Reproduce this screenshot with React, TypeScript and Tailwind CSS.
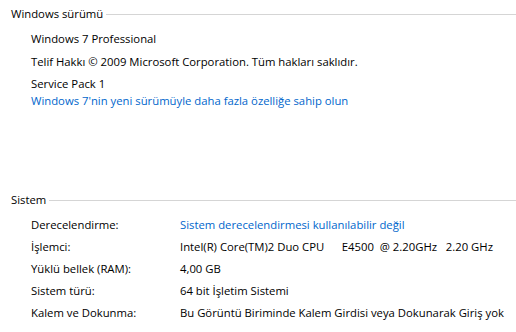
import React from "react";

const font = { fontFamily: '"Open Sans", "Liberation Sans", sans-serif' };

function Heading({ title, className = "" }: { title: string; className?: string }) {
  return (
    <div className={`flex h-[20px] items-center pl-[11px] ${className}`}>
      <span className="text-[11.3px] leading-[20px] text-black">{title}</span>
      <div className="ml-[3px] h-px flex-1 bg-[#d5d5d5]" />
    </div>
  );
}

function Row({ label, value, link = false }: { label: string; value: string; link?: boolean }) {
  return (
    <div className="flex h-[22px] items-center pl-[31px] text-[11.3px] leading-[22px]">
      <div className="w-[149px] shrink-0 text-black">{label}</div>
      <div className={`whitespace-pre ${link ? "text-[#0066cc]" : "text-black"}`}>{value}</div>
    </div>
  );
}

export default function App() {
  return (
    <div className="h-[332px] w-[516px] overflow-hidden bg-white pt-[4px]" style={font}>
      <Heading title="Windows sürümü" />
      <div className="pl-[31px] text-[11.3px] text-black">
        <div className="mt-[5px] flex h-[20px] items-center">Windows 7 Professional</div>
        <div className="mt-[3px] flex h-[20px] items-center">
          Telif Hakkı © 2009 Microsoft Corporation. Tüm hakları saklıdır.
        </div>
        <div className="mt-[2px] flex h-[20px] items-center">Service Pack 1</div>
        <div className="flex h-[14px] items-center text-[#0066cc]">
          Windows 7'nin yeni sürümüyle daha fazla özelliğe sahip olun
        </div>
      </div>
      <Heading title="Sistem" className="mt-[82px]" />
      <div className="mt-[4px]">
        <Row label="Derecelendirme:" value="Sistem derecelendirmesi kullanılabilir değil" link />
        <Row label="İşlemci:" value="Intel(R) Core(TM)2 Duo CPU      E4500  @ 2.20GHz   2.20 GHz" />
        <Row label="Yüklü bellek (RAM):" value="4,00 GB" />
        <Row label="Sistem türü:" value="64 bit İşletim Sistemi" />
        <Row label="Kalem ve Dokunma:" value="Bu Görüntü Biriminde Kalem Girdisi veya Dokunarak Giriş yok" />
      </div>
    </div>
  );
}
